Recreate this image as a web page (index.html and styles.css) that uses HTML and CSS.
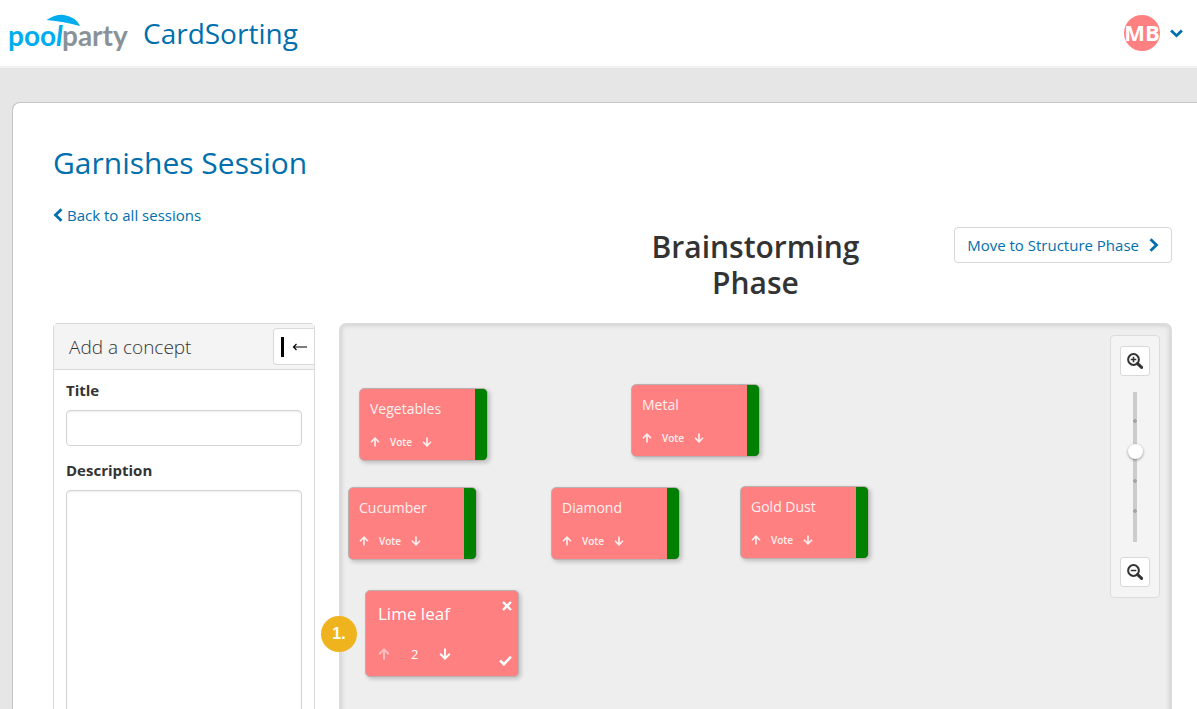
FILE: index.html
```html
<!DOCTYPE html>
<html lang="en">
<head>
<meta charset="utf-8">
<meta name="viewport" content="width=device-width, initial-scale=1">
<title>PoolParty CardSorting</title>
<link rel="stylesheet" href="styles.css">
</head>
<body>
<svg class="sprite" aria-hidden="true">
  <symbol id="up" viewBox="0 0 10 10"><path d="M5 9.5V1.2M1 5.2L5 1.2L9 5.2" fill="none" stroke="currentColor" stroke-width="1.6"/></symbol>
  <symbol id="down" viewBox="0 0 10 10"><path d="M5 .5V8.8M1 4.8L5 8.8L9 4.8" fill="none" stroke="currentColor" stroke-width="1.6"/></symbol>
  <symbol id="glass" viewBox="0 0 16 16"><circle cx="6.5" cy="6.5" r="5.4" fill="none" stroke="currentColor" stroke-width="2"/><path d="M10.6 10.6L14.6 14.4" stroke="currentColor" stroke-width="3" stroke-linecap="round"/><path d="M3.7 6.5h5.6" stroke="currentColor" stroke-width="1.5"/></symbol>
</svg>
<div class="app">
  <header class="topbar">
    <a class="brand" href="#">
      <svg class="logo" viewBox="0 0 124 44" role="img" aria-label="poolparty">
        <text class="logo-blue" x="0" y="35">poo</text>
        <path d="M38.500 9Q48 3 56 4Q68 6 72 15Q56 10.500 38.500 9Z" fill="#00adee"/>
        <text class="logo-blue logo-stem" x="48" y="35">l</text>
        <text class="logo-grey" x="54" y="35">party</text>
      </svg>
      <span class="product">CardSorting</span>
    </a>
    <button class="user" type="button" aria-label="User menu">
      <span class="avatar">MB</span>
      <svg class="caret" viewBox="0 0 12 8"><path d="M1 1.2L6 6L11 1.2" fill="none" stroke="currentColor" stroke-width="2.6"/></svg>
    </button>
  </header>
  <main class="page">
    <h1 class="session">Garnishes Session</h1>
    <a class="back" href="#"><svg class="chevron" viewBox="0 0 10 14"><path d="M8.5 1.2L2.5 7L8.5 12.8" fill="none" stroke="currentColor" stroke-width="2.8"/></svg>Back to all sessions</a>
    <div class="phase-row">
      <h2 class="phase">Brainstorming Phase</h2>
      <button class="next" type="button">Move to Structure Phase<svg class="chevron" viewBox="0 0 10 14"><path d="M1.5 1.2L7.5 7L1.5 12.8" fill="none" stroke="currentColor" stroke-width="2.8"/></svg></button>
    </div>
    <div class="workspace">
      <form class="concept">
        <div class="concept-head">
          <h3 class="concept-title">Add a concept</h3>
          <button class="collapse" type="button" aria-label="Collapse panel"><span class="bar"></span><svg class="arrow" viewBox="0 0 16 10"><path d="M1.5 5H15M4.5 2L1.5 5L4.5 8" fill="none" stroke="currentColor" stroke-width="1.2"/></svg></button>
        </div>
        <div class="fields">
          <label class="label" for="title">Title</label>
          <input class="field" id="title" type="text">
          <label class="label" for="description">Description</label>
          <textarea class="field area" id="description"></textarea>
        </div>
      </form>
      <section class="board" aria-label="Board">
        <article class="card vegetables"><h4 class="name">Vegetables</h4><div class="votes"><button class="vote" type="button" aria-label="Vote up"><svg><use href="#up"/></svg></button><span>Vote</span><button class="vote" type="button" aria-label="Vote down"><svg><use href="#down"/></svg></button></div></article>
        <article class="card metal"><h4 class="name">Metal</h4><div class="votes"><button class="vote" type="button" aria-label="Vote up"><svg><use href="#up"/></svg></button><span>Vote</span><button class="vote" type="button" aria-label="Vote down"><svg><use href="#down"/></svg></button></div></article>
        <article class="card cucumber"><h4 class="name">Cucumber</h4><div class="votes"><button class="vote" type="button" aria-label="Vote up"><svg><use href="#up"/></svg></button><span>Vote</span><button class="vote" type="button" aria-label="Vote down"><svg><use href="#down"/></svg></button></div></article>
        <article class="card diamond"><h4 class="name">Diamond</h4><div class="votes"><button class="vote" type="button" aria-label="Vote up"><svg><use href="#up"/></svg></button><span>Vote</span><button class="vote" type="button" aria-label="Vote down"><svg><use href="#down"/></svg></button></div></article>
        <article class="card gold"><h4 class="name">Gold Dust</h4><div class="votes"><button class="vote" type="button" aria-label="Vote up"><svg><use href="#up"/></svg></button><span>Vote</span><button class="vote" type="button" aria-label="Vote down"><svg><use href="#down"/></svg></button></div></article>
        <article class="card large lime">
          <div class="line"><h4 class="name">Lime leaf</h4><button class="vote" type="button" aria-label="Remove"><svg viewBox="0 0 10 10"><path d="M1 1L9 9M9 1L1 9" stroke="currentColor" stroke-width="2.4"/></svg></button></div>
          <div class="line end"><div class="votes"><button class="vote" type="button" aria-label="Vote up" disabled><svg><use href="#up"/></svg></button><span>2</span><button class="vote" type="button" aria-label="Vote down"><svg><use href="#down"/></svg></button></div><button class="vote" type="button" aria-label="Confirm"><svg class="tick" viewBox="0 0 12 10"><path d="M1 5L4.5 8.5L11 1.5" fill="none" stroke="currentColor" stroke-width="2.4"/></svg></button></div>
        </article>
        <span class="step">1.</span>
        <div class="zoom">
          <button class="zoom-btn" type="button" aria-label="Zoom in"><svg viewBox="0 0 16 16"><use href="#glass"/><path d="M6.5 3.7v5.6" stroke="currentColor" stroke-width="1.5"/></svg></button>
          <input class="slider" type="range" min="0" max="5" value="3" aria-label="Zoom level">
          <button class="zoom-btn" type="button" aria-label="Zoom out"><svg viewBox="0 0 16 16"><use href="#glass"/></svg></button>
        </div>
      </section>
    </div>
  </main>
</div>
</body>
</html>
```

FILE: styles.css
```css
* { box-sizing: border-box; }
body {
  margin: 0;
  background: #e6e6e6;
  color: #333;
  font: 15px/20px "Segoe UI", "Open Sans", "Noto Sans", sans-serif;
}
button { font: inherit; color: inherit; cursor: pointer; }
h1, h2, h3, h4 { margin: 0; font-weight: 400; }
a { color: #006fad; text-decoration: none; }
.sprite { display: none; }
.app { height: 100vh; overflow: hidden; display: flex; flex-direction: column; }

.topbar {
  flex: none;
  display: flex;
  align-items: center;
  justify-content: space-between;
  height: 66px;
  padding: 0 14px 0 8px;
  background: #fff;
  box-shadow: 0 2px 0 #f2f2f2;
}
.brand { display: flex; align-items: center; gap: 11px; }
.logo { width: 124px; height: 44px; overflow: visible; }
.logo text { font: 700 28px Lato, sans-serif; }
.logo-blue { fill: #00adee; }
.logo .logo-stem { font-style: italic; }
.logo-grey { fill: #8a9299; }
.product { font-size: 28px; line-height: 40px; }
.user { display: flex; align-items: center; gap: 10px; padding: 0; border: 0; background: none; color: #006fad; }
.avatar {
  width: 36px;
  height: 36px;
  border-radius: 50%;
  background: #ff8080;
  color: #fff;
  font-weight: 700;
  font-size: 22px;
  line-height: 34px;
  display: flex;
  justify-content: center;
}
.caret { width: 13px; height: 9px; }

.page {
  flex: 1 0 auto;
  margin: 36px 0 0 12px;
  padding: 40px 25px 0 40px;
  background: #fff;
  border: 1px solid #c4c4c4;
  border-right: 0;
  border-radius: 8px 0 0 0;
}
.session { color: #006fad; font-size: 30px; line-height: 40px; }
.back { display: flex; align-items: center; gap: 4px; margin-top: 22px; }
.chevron { width: 10px; height: 14px; }
.phase-row {
  display: grid;
  grid-template-columns: 1fr 1fr 1fr;
  align-items: start;
  margin: 2px 0 22px 286px;
}
.phase { grid-column: 2; padding-top: 2px; text-align: center; font-size: 30px; line-height: 36px; font-weight: 600; }
.next {
  justify-self: end;
  display: flex;
  align-items: center;
  gap: 10px;
  height: 36px;
  padding: 0 12px;
  background: #fff;
  border: 1px solid #d6d6d6;
  border-radius: 4px;
  color: #006fad;
  white-space: nowrap;
}
.workspace { display: grid; grid-template-columns: 262px 1fr; gap: 24px; }

.concept { border: 1px solid #d9d9d9; border-radius: 4px; }
.concept-head {
  display: flex;
  align-items: center;
  justify-content: space-between;
  height: 46px;
  padding-left: 15px;
  background: #f4f4f4;
  border-bottom: 1px solid #d9d9d9;
}
.concept-title { font-size: 19px; line-height: 28px; font-weight: 300; }
.collapse {
  display: flex;
  align-items: center;
  gap: 8px;
  height: 37px;
  padding: 0 6px 0 7px;
  background: #fff;
  border: 1px solid #d9d9d9;
  border-right: 0;
  border-radius: 4px 0 0 4px;
  color: #000;
}
.bar { width: 3px; height: 20px; background: #000; }
.arrow { width: 16px; height: 10px; }
.fields { display: flex; flex-direction: column; padding: 10px 12px; }
.label { font-weight: 700; line-height: 20px; margin-bottom: 10px; }
.field {
  width: 100%;
  height: 36px;
  margin: 0 0 14px;
  padding: 6px 12px;
  font: inherit;
  border: 1px solid #d4d4d4;
  border-radius: 4px;
  background: #fff;
  box-shadow: inset 0 1px 2px #00000014;
}
.area { height: 300px; resize: none; }

/* Cards sit at free positions on the board. */
.board {
  position: relative;
  background: #eee;
  border: 3px solid #dcdcdc;
  border-radius: 7px;
  box-shadow: inset 0 0 5px #0000001a;
}
.card {
  position: absolute;
  width: 129px;
  height: 73px;
  padding: 10px;
  display: flex;
  flex-direction: column;
  justify-content: space-between;
  color: #fff0f0;
  background: linear-gradient(to left, #008000 12px, #ff8080 12px);
  border: 1px solid #bbb0b0;
  border-radius: 5px;
  box-shadow: 2px 2px 4px #0003;
}
.vegetables { left: 17px; top: 62px; }
.metal { left: 289px; top: 58px; }
.cucumber { left: 6px; top: 161px; }
.diamond { left: 209px; top: 161px; }
.gold { left: 398px; top: 160px; }
.lime { left: 23px; top: 264px; }
.name { font-size: 14px; line-height: 20px; font-weight: 500; }
.votes { display: flex; align-items: center; gap: 10px; font-size: 10px; line-height: 16px; font-weight: 600; }
.vote { display: flex; padding: 0; border: 0; background: none; }
.vote:disabled { opacity: .5; }
.vote svg { width: 10px; height: 10px; }
.large { width: 154px; height: 87px; padding: 10px 6px 6px 12px; background: #ff8080; color: #fff; }
.large .name { font-size: 17px; line-height: 26px; }
.large .votes { gap: 21px; font-size: 13px; line-height: 32px; font-weight: 400; }
.large .votes svg { width: 12px; height: 12px; }
.large .tick { width: 13px; height: 11px; }
.line { display: flex; justify-content: space-between; align-items: flex-start; }
.end { align-items: flex-end; }
.end > .vote { margin-bottom: 4px; }
.step {
  position: absolute;
  left: -21px;
  top: 290px;
  width: 36px;
  height: 36px;
  border-radius: 50%;
  background: #efb31d;
  color: #fff;
  font: 700 16px/36px "Liberation Sans", Arial, sans-serif;
  text-align: center;
}
.zoom {
  position: absolute;
  top: 9px;
  right: 9px;
  width: 50px;
  padding: 10px 0;
  display: flex;
  flex-direction: column;
  align-items: center;
  gap: 8px;
  background: #f4f4f4;
  border: 1px solid #dcdcdc;
  border-radius: 4px;
}
.zoom-btn {
  display: flex;
  align-items: center;
  justify-content: center;
  width: 30px;
  height: 30px;
  padding: 0;
  background: #fff;
  border: 1px solid #d9d9d9;
  border-radius: 3px;
}
.zoom-btn svg { width: 16px; height: 16px; }
.slider {
  appearance: none;
  writing-mode: vertical-lr;
  direction: rtl;
  width: 16px;
  height: 165px;
  margin: 0;
  background:
    radial-gradient(circle, #a6a6a6 2px, transparent 2px) center 22px / 16px 30px no-repeat,
    radial-gradient(circle, #a6a6a6 2px, transparent 2px) center 82px / 16px 30px no-repeat,
    radial-gradient(circle, #a6a6a6 2px, transparent 2px) center 112px / 16px 30px no-repeat,
    linear-gradient(#ccc, #ccc) center / 4px 150px no-repeat;
}
.slider::-webkit-slider-thumb {
  appearance: none;
  width: 15px;
  height: 15px;
  border-radius: 50%;
  background: #fff;
  box-shadow: 0 1px 3px #0006;
}
```
